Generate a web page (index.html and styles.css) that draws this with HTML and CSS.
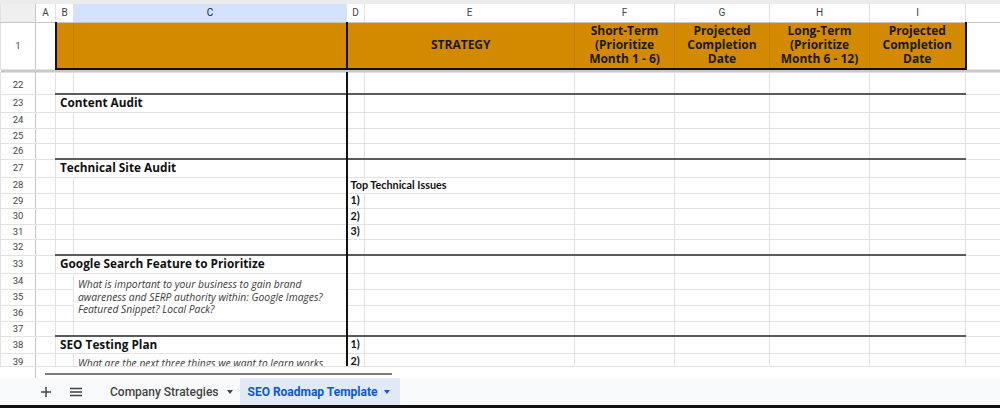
FILE: index.html
```html
<!DOCTYPE html>
<html lang="en">
<head>
  <meta charset="UTF-8">
  <title>SEO Roadmap Template</title>
  <link rel="stylesheet" href="styles.css">
</head>
<body>
  <div class="toolbar-edge"></div>

  <div class="grid-wrap">
    <table class="grid">
      <colgroup>
        <col class="w-rn"><col class="w-a"><col class="w-b"><col class="w-c"><col class="w-d">
        <col class="w-e"><col class="w-f"><col class="w-g"><col class="w-h"><col class="w-i"><col class="w-j">
      </colgroup>

      <tr class="colhead">
        <th class="corner"></th><th>A</th><th>B</th><th class="sel">C</th><th>D</th>
        <th>E</th><th>F</th><th>G</th><th>H</th><th>I</th><th></th>
      </tr>

      <tr class="r-title">
        <th class="rn">1</th>
        <td></td>
        <td class="hd first"></td>
        <td class="hd"></td>
        <td class="hd dl" colspan="2">STRATEGY</td>
        <td class="hd">Short-Term<br>(Prioritize<br>Month 1 - 6)</td>
        <td class="hd">Projected<br>Completion<br>Date</td>
        <td class="hd">Long-Term<br>(Prioritize<br>Month 6 - 12)</td>
        <td class="hd last">Projected<br>Completion<br>Date</td>
        <td></td>
      </tr>

      <tr class="freeze"><td colspan="11"></td></tr>

      <tr class="h22"><th class="rn low">22</th><td></td><td></td><td></td><td class="dl"></td><td></td><td></td><td></td><td></td><td></td><td></td></tr>

      <tr class="h18">
        <th class="rn">23</th><td></td>
        <td class="st section" colspan="2">Content Audit</td>
        <td class="st dl"></td><td class="st"></td><td class="st"></td><td class="st"></td><td class="st"></td><td class="st"></td><td></td>
      </tr>
      <tr class="h16"><th class="rn">24</th><td></td><td></td><td></td><td class="dl"></td><td></td><td></td><td></td><td></td><td></td><td></td></tr>
      <tr class="h15"><th class="rn">25</th><td></td><td></td><td></td><td class="dl"></td><td></td><td></td><td></td><td></td><td></td><td></td></tr>
      <tr class="h16"><th class="rn">26</th><td></td><td></td><td></td><td class="dl"></td><td></td><td></td><td></td><td></td><td></td><td></td></tr>

      <tr class="h18">
        <th class="rn">27</th><td></td>
        <td class="st section" colspan="2">Technical Site Audit</td>
        <td class="st dl"></td><td class="st"></td><td class="st"></td><td class="st"></td><td class="st"></td><td class="st"></td><td></td>
      </tr>
      <tr class="h16"><th class="rn">28</th><td></td><td></td><td></td><td class="dl item" colspan="2">Top Technical Issues</td><td></td><td></td><td></td><td></td><td></td></tr>
      <tr class="h15"><th class="rn">29</th><td></td><td></td><td></td><td class="dl item">1)</td><td></td><td></td><td></td><td></td><td></td><td></td></tr>
      <tr class="h16"><th class="rn">30</th><td></td><td></td><td></td><td class="dl item">2)</td><td></td><td></td><td></td><td></td><td></td><td></td></tr>
      <tr class="h15"><th class="rn">31</th><td></td><td></td><td></td><td class="dl item">3)</td><td></td><td></td><td></td><td></td><td></td><td></td></tr>
      <tr class="h16"><th class="rn">32</th><td></td><td></td><td></td><td class="dl"></td><td></td><td></td><td></td><td></td><td></td><td></td></tr>

      <tr class="h18">
        <th class="rn">33</th><td></td>
        <td class="st section" colspan="2">Google Search Feature to Prioritize</td>
        <td class="st dl"></td><td class="st"></td><td class="st"></td><td class="st"></td><td class="st"></td><td class="st"></td><td></td>
      </tr>
      <tr class="h16">
        <th class="rn">34</th><td></td><td></td>
        <td class="note" rowspan="3">What is important to your business to gain brand<br>awareness and SERP authority within: Google Images?<br>Featured Snippet? Local Pack?</td>
        <td class="dl"></td><td></td><td></td><td></td><td></td><td></td><td></td>
      </tr>
      <tr class="h16"><th class="rn">35</th><td></td><td></td><td class="dl"></td><td></td><td></td><td></td><td></td><td></td><td></td></tr>
      <tr class="h16"><th class="rn">36</th><td></td><td></td><td class="dl"></td><td></td><td></td><td></td><td></td><td></td><td></td></tr>
      <tr class="h15"><th class="rn">37</th><td></td><td></td><td></td><td class="dl"></td><td></td><td></td><td></td><td></td><td></td><td></td></tr>

      <tr class="h17">
        <th class="rn">38</th><td></td>
        <td class="st section" colspan="2">SEO Testing Plan</td>
        <td class="st dl item">1)</td><td class="st"></td><td class="st"></td><td class="st"></td><td class="st"></td><td class="st"></td><td></td>
      </tr>
      <tr class="h16">
        <th class="rn">39</th><td></td><td></td>
        <td class="note top">What are the next three things we want to learn works</td>
        <td class="dl item">2)</td><td></td><td></td><td></td><td></td><td></td><td></td>
      </tr>
    </table>
  </div>

  <div class="hscroll">
    <div class="hscroll-rn"></div>
    <div class="hscroll-thumb"></div>
  </div>

  <div class="tabbar">
    <button class="tab-icon" title="Add sheet">
      <svg width="12" height="12" viewBox="0 0 12 12"><path d="M6 1v10M1 6h10" stroke="#444" stroke-width="1.5"/></svg>
    </button>
    <button class="tab-icon menu" title="All sheets">
      <svg width="12" height="10" viewBox="0 0 12 10"><path d="M0 1.5h12M0 5h12M0 8.5h12" stroke="#444" stroke-width="1.4"/></svg>
    </button>
    <div class="tab">Company Strategies <span class="caret"></span></div>
    <div class="tab active">SEO Roadmap Template <span class="caret"></span></div>
  </div>
  <div class="bottom-edge"></div>
</body>
</html>
```

FILE: styles.css
```css
body {
  margin: 0;
  width: 1000px;
  height: 408px;
  overflow: hidden;
  background: #fff;
  font-family: "Open Sans", Lato, sans-serif;
  color: #1f1f1f;
}

.toolbar-edge {
  height: 4px;
  background: #ececec;
}

.grid-wrap {
  height: 362px;
  overflow: hidden;
}
.grid {
  border-collapse: collapse;
  table-layout: fixed;
  width: 1040px;
}
.w-rn { width: 35px; }
.w-a { width: 20px; }
.w-b { width: 18px; }
.w-c { width: 273px; }
.w-d { width: 18px; }
.w-e { width: 210px; }
.w-f { width: 100px; }
.w-g { width: 95px; }
.w-h { width: 100px; }
.w-i { width: 96px; }
.w-j { width: 75px; }

.grid td,
.grid th {
  border: 1px solid #e2e2e2;
  padding: 0;
  line-height: 1;
  font-size: 11px;
  overflow: hidden;
  white-space: nowrap;
}

/* column letters */
.colhead {
  height: 18px;
}
.colhead th {
  font-family: Roboto, Arial, sans-serif;
  font-weight: 400;
  font-size: 10px;
  color: #444;
  border-top: none;
  border-bottom: 1px solid #c4c7c5;
}
.colhead th.corner {
  background: #efefef;
  border-right: 1px solid #c4c7c5;
}
.colhead th.sel {
  background: #d3e3fd;
  color: #0b1f44;
}

/* row numbers */
.grid th.rn {
  font-family: Roboto, Arial, sans-serif;
  font-weight: 400;
  font-size: 9.5px;
  color: #444;
  text-align: center;
  border-right: 1px solid #c4c7c5;
}
.grid th.rn.low {
  vertical-align: bottom;
  padding-bottom: 4px;
}

/* frozen title row */
.r-title {
  height: 47px;
}
.grid td.hd {
  background: #d48a00;
  border-color: #c58000;
  border-bottom: 2px solid #111;
  font-weight: 700;
  font-size: 12px;
  line-height: 14px;
  color: #1a1a1a;
  text-align: center;
}
.grid td.hd.first {
  border-left: 2px solid #111;
}
.grid td.hd.last {
  border-right: 2px solid #111;
}
.freeze {
  height: 3px;
}
.freeze td {
  background: #c9c9c9;
  border: none;
  font-size: 0;
}

.h22 { height: 22px; }
.h18 { height: 18px; }
.h17 { height: 17px; }
.h16 { height: 16px; }
.h15 { height: 15px; }

.grid td.dl {
  border-left: 2px solid #111;
}
.grid td.st {
  border-top: 2px solid #5a5a5a;
}

.grid td.section {
  font-weight: 700;
  font-size: 11.8px;
  padding-left: 4px;
  color: #111;
}
.grid td.item {
  font-family: Lato, "Open Sans", sans-serif;
  font-weight: 700;
  font-size: 10.8px;
  padding-left: 3px;
  color: #111;
}
.grid td.note {
  font-style: italic;
  font-size: 10.3px;
  line-height: 12.7px;
  color: #3a3a3a;
  padding-left: 4px;
}
.grid td.note.top {
  vertical-align: top;
  padding-top: 3px;
}

/* horizontal scroll strip */
.hscroll {
  height: 12px;
  display: flex;
  border-top: 1px solid #e2e2e2;
  box-sizing: border-box;
}
.hscroll-rn {
  width: 35px;
  border-right: 1px solid #c4c7c5;
}
.hscroll-thumb {
  width: 347px;
  height: 2px;
  margin: 6px 0 0 9px;
  background: #7d7d7d;
}

/* sheet tabs */
.tabbar {
  height: 27px;
  display: flex;
  align-items: stretch;
  background: #f8f9fa;
  padding-left: 36px;
  font-family: Roboto, Arial, sans-serif;
}
.tab-icon {
  width: 20px;
  border: none;
  background: none;
  padding: 0;
  display: flex;
  align-items: center;
  justify-content: center;
}
.tab-icon.menu {
  margin-left: 10px;
}
.tab {
  display: flex;
  align-items: center;
  gap: 8px;
  font-size: 12px;
  font-weight: 500;
  color: #444;
  padding: 0 7px 0 24px;
}
.tab.active {
  background: #e1e9f7;
  color: #0b57d0;
  font-weight: 700;
  gap: 7px;
  padding: 0 10px 0 8px;
}
.caret {
  width: 0;
  height: 0;
  border-left: 3.5px solid transparent;
  border-right: 3.5px solid transparent;
  border-top: 4px solid currentColor;
}
.bottom-edge {
  height: 3px;
  background: #111;
}
```
